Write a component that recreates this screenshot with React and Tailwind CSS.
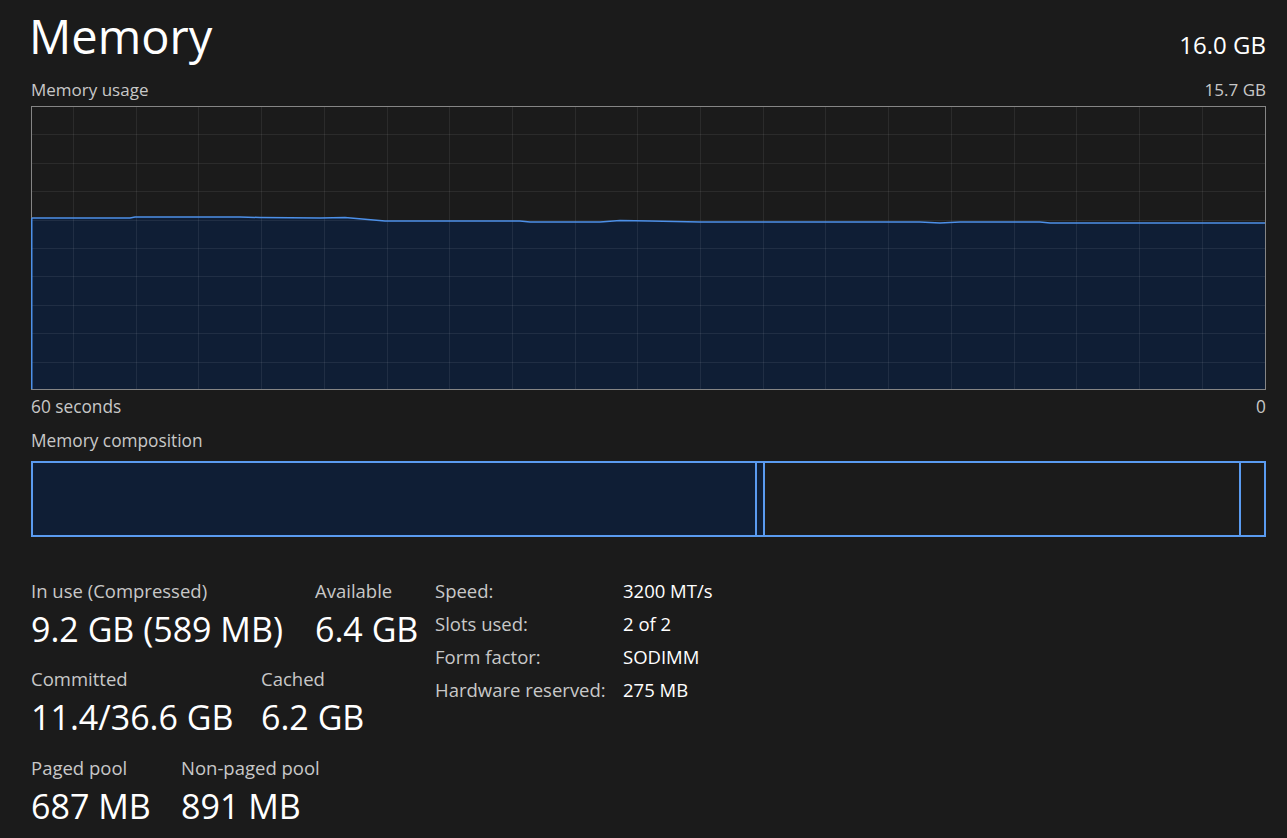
import React from "react";

const W = 1235;
const H = 284;
const pts = [
  [0, 112], [99, 112], [104, 111], [209, 111], [229, 111.5], [289, 112], [314, 111.5],
  [354, 115], [489, 115], [499, 116], [569, 116], [589, 114.5], [619, 115], [669, 116],
  [889, 116], [909, 117], [929, 116], [1009, 116], [1019, 117], [1235, 117],
];

function Chart() {
  const line = pts.map((p, i) => `${i ? "L" : "M"}${p[0]} ${p[1]}`).join(" ");
  const fill = `${line} L${W} ${H} L0 ${H} Z`;
  const vx = [];
  for (let k = 0; k < 19; k++) vx.push(Math.round(42 + k * 62.7) + 0.5);
  const hy = [];
  for (let k = 1; k < 10; k++) hy.push(Math.round(k * 28.4) + 0.5);
  return (
    <svg width={W} height={H} viewBox={`0 0 ${W} ${H}`} className="block">
      <path d={fill} fill="#0f1e35" />
      {vx.map((x) => (
        <line key={"v" + x} x1={x} y1={0} x2={x} y2={H} stroke="rgba(255,255,255,0.075)" strokeWidth="1" />
      ))}
      {hy.map((y) => (
        <line key={"h" + y} x1={0} y1={y} x2={W} y2={y} stroke="rgba(255,255,255,0.075)" strokeWidth="1" />
      ))}
      <path d={line} fill="none" stroke="#4d90e8" strokeWidth="1.5" />
      <rect x="0.5" y="0.5" width={W - 1} height={H - 1} fill="none" stroke="#858585" strokeWidth="1" />
      <line x1="0.75" y1="112" x2="0.75" y2={H - 1} stroke="#4d90e8" strokeWidth="1.5" />
    </svg>
  );
}

function Stat({ label, value, w }) {
  return (
    <div className={w}>
      <div className="text-[18.5px] leading-[20px] text-[#c8c8c8]">{label}</div>
      <div className="mt-[8px] text-[34px] leading-[40px] text-white">{value}</div>
    </div>
  );
}

export default function App() {
  return (
    <div
      className="min-h-screen w-full bg-[#1b1b1b] pl-[31px] pr-[21px] pt-[8px] text-white"
      style={{ fontFamily: '"Open Sans", "Noto Sans", sans-serif' }}
    >
      <div className="flex items-baseline justify-between">
        <div className="-ml-[2px] text-[47px] leading-[56px] text-white">Memory</div>
        <div className="text-[24px] leading-[30px] text-white">16.0 GB</div>
      </div>
      <div className="mt-[16px] flex justify-between text-[17px] leading-[20px] text-[#c8c8c8]">
        <span>Memory usage</span>
        <span>15.7 GB</span>
      </div>
      <div className="mt-[6px]">
        <Chart />
      </div>
      <div className="mt-[7px] flex justify-between text-[17.3px] leading-[20px] text-[#c8c8c8]">
        <span>60 seconds</span>
        <span>0</span>
      </div>
      <div className="mt-[14px] text-[17.3px] leading-[20px] text-[#c8c8c8]">Memory composition</div>
      <div className="mt-[10px] flex h-[76px] w-[1235px] border-2 border-[#5a9bf0]">
        <div className="w-[724px] border-r-2 border-[#5a9bf0] bg-[#0f1e35]" />
        <div className="w-[8px] border-r-2 border-[#5a9bf0] bg-[#0f1e35]" />
        <div className="flex-1 border-r-2 border-[#5a9bf0]" />
        <div className="w-[23px]" />
      </div>
      <div className="mt-[42px] flex items-start">
        <div className="w-[404px] shrink-0 pt-[2px]">
          <div className="flex pb-[20px]">
            <Stat label="In use (Compressed)" value="9.2 GB (589 MB)" w="w-[284px] shrink-0" />
            <Stat label="Available" value="6.4 GB" w="" />
          </div>
          <div className="flex pb-[21px]">
            <Stat label="Committed" value="11.4/36.6 GB" w="w-[230px] shrink-0" />
            <Stat label="Cached" value="6.2 GB" w="" />
          </div>
          <div className="flex">
            <Stat label="Paged pool" value="687 MB" w="w-[150px] shrink-0" />
            <Stat label="Non-paged pool" value="891 MB" w="" />
          </div>
        </div>
        <div className="grid grid-cols-[188px_auto] content-start gap-y-[9px] text-[18.5px] leading-[24px]">
          <span className="text-[#c8c8c8]">Speed:</span>
          <span className="text-white">3200 MT/s</span>
          <span className="text-[#c8c8c8]">Slots used:</span>
          <span className="text-white">2 of 2</span>
          <span className="text-[#c8c8c8]">Form factor:</span>
          <span className="text-white">SODIMM</span>
          <span className="text-[#c8c8c8]">Hardware reserved:</span>
          <span className="text-white">275 MB</span>
        </div>
      </div>
    </div>
  );
}
